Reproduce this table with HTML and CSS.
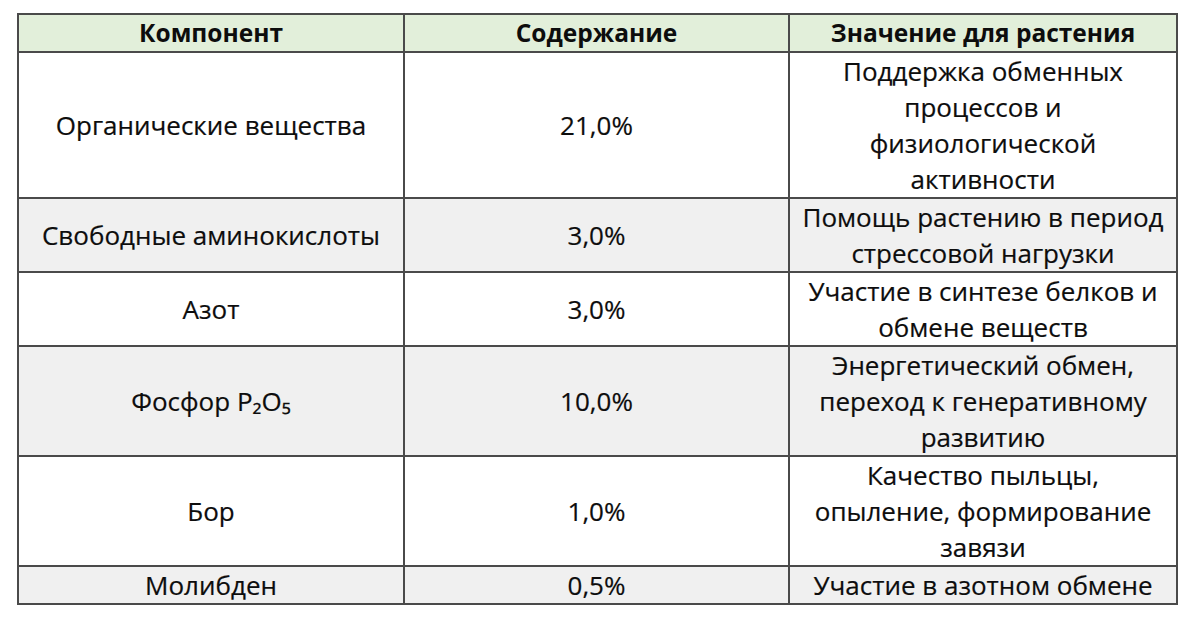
FILE: index.html
```html
<!DOCTYPE html>
<html lang="ru">
<head>
<meta charset="utf-8">
<link rel="stylesheet" href="styles.css">
</head>
<body>
<table class="grid">
  <colgroup>
    <col class="c1"><col class="c2"><col class="c3">
  </colgroup>
  <thead>
    <tr class="head">
      <th>Компонент</th>
      <th>Содержание</th>
      <th>Значение для растения</th>
    </tr>
  </thead>
  <tbody>
    <tr>
      <td>Органические вещества</td>
      <td>21,0%</td>
      <td>Поддержка обменных<br>процессов и<br>физиологической<br>активности</td>
    </tr>
    <tr class="alt">
      <td>Свободные аминокислоты</td>
      <td>3,0%</td>
      <td>Помощь растению в период<br>стрессовой нагрузки</td>
    </tr>
    <tr>
      <td>Азот</td>
      <td>3,0%</td>
      <td>Участие в синтезе белков и<br>обмене веществ</td>
    </tr>
    <tr class="alt">
      <td>Фосфор P₂O₅</td>
      <td>10,0%</td>
      <td>Энергетический обмен,<br>переход к генеративному<br>развитию</td>
    </tr>
    <tr>
      <td>Бор</td>
      <td>1,0%</td>
      <td>Качество пыльцы,<br>опыление, формирование<br>завязи</td>
    </tr>
    <tr class="alt">
      <td>Молибден</td>
      <td>0,5%</td>
      <td>Участие в азотном обмене</td>
    </tr>
  </tbody>
</table>
</body>
</html>
```

FILE: styles.css
```css
html, body {
  margin: 0;
  background: #ffffff;
}
body {
  padding: 13px 0 0 17px;
  font-family: "Open Sans", "Noto Sans", sans-serif;
  color: #0d0d0d;
}
.grid {
  border-collapse: collapse;
  width: 1159px;
  table-layout: fixed;
}
.c1 { width: 386px; }
.c2 { width: 385px; }
.c3 { width: 388px; }
.grid th, .grid td {
  border: 2px solid #4a4a4a;
  text-align: center;
  vertical-align: middle;
  padding: 0 2px;
  line-height: 36px;
}
.grid th {
  font-weight: 700;
  font-size: 24.5px;
  background: #e2efda;
  height: 35px;
}
.grid td {
  font-size: 26px;
  font-weight: 400;
  -webkit-text-stroke: 0.2px #0d0d0d;
}
.alt td {
  background: #f0f0f0;
}
```
